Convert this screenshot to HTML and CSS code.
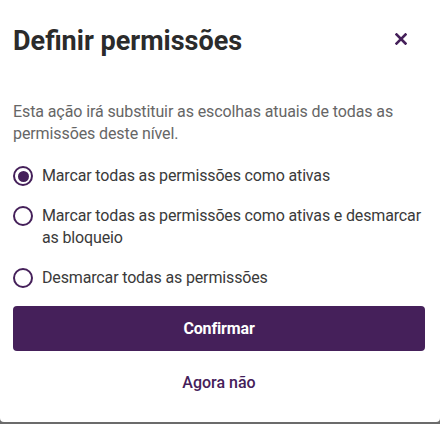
FILE: index.html
```html
<!DOCTYPE html>
<html lang="pt">
<head>
    <meta charset="UTF-8">
    <meta name="viewport" content="width=device-width, initial-scale=1.0">
    <title>Definir permissões</title>
    <link rel="stylesheet" href="styles.css">
</head>
<body>
    <div class="dialog">
        <div class="dialog-header">
            <h1>Definir permissões</h1>
            <button class="close-btn" aria-label="Fechar">
                <svg width="12" height="12" viewBox="0 0 12 12">
                    <path d="M1.5 1.5 L10.5 10.5 M10.5 1.5 L1.5 10.5" stroke="#45205a" stroke-width="2.6" stroke-linecap="square" fill="none"/>
                </svg>
            </button>
        </div>

        <p class="description">Esta ação irá substituir as escolhas atuais de todas as permissões deste nível.</p>

        <div class="options">
            <label class="option">
                <span class="radio checked"></span>
                <span class="option-text">Marcar todas as permissões como ativas</span>
            </label>
            <label class="option">
                <span class="radio"></span>
                <span class="option-text">Marcar todas as permissões como ativas e desmarcar as bloqueio</span>
            </label>
            <label class="option">
                <span class="radio"></span>
                <span class="option-text">Desmarcar todas as permissões</span>
            </label>
        </div>

        <button class="btn-primary">Confirmar</button>
        <button class="btn-secondary">Agora não</button>
    </div>
</body>
</html>
```

FILE: styles.css
```css
body {
    font-family: Roboto, "Liberation Sans", sans-serif;
    margin: 0;
    padding: 0;
    background-color: #6b6b6b;
}

.dialog {
    background-color: #fff;
    width: 440px;
    height: 422px;
    box-sizing: border-box;
    padding: 25px 15px 0 13px;
    border-radius: 0 0 4px 4px;
}

.dialog-header {
    display: flex;
    align-items: flex-start;
    justify-content: space-between;
}

h1 {
    margin: 0;
    font-size: 27px;
    line-height: 32px;
    font-weight: 700;
    color: #2b2b2b;
}

.close-btn {
    background: none;
    border: none;
    padding: 0;
    width: 24px;
    height: 24px;
    margin-top: 2px;
    margin-right: 12px;
    display: flex;
    align-items: center;
    justify-content: center;
}

.description {
    margin: 44px 0 0;
    font-size: 16px;
    line-height: 22px;
    letter-spacing: -0.1px;
    color: #666;
}

.options {
    margin-top: 20px;
    display: flex;
    flex-direction: column;
    gap: 18px;
}

.option {
    display: flex;
    align-items: flex-start;
    gap: 9px;
    font-size: 16px;
    line-height: 22px;
    letter-spacing: -0.15px;
    color: #3a3a3a;
}

.radio {
    flex: none;
    width: 20px;
    height: 20px;
    box-sizing: border-box;
    border: 2px solid #45205a;
    border-radius: 50%;
    margin-top: 1px;
    display: flex;
    align-items: center;
    justify-content: center;
}

.radio.checked::after {
    content: "";
    width: 11px;
    height: 11px;
    border-radius: 50%;
    background-color: #45205a;
}

.btn-primary {
    display: block;
    width: 100%;
    height: 45px;
    margin-top: 17px;
    border: none;
    border-radius: 4px;
    background-color: #45205a;
    color: #fff;
    font-family: inherit;
    font-size: 16px;
    font-weight: 700;
    letter-spacing: -0.15px;
}

.btn-secondary {
    display: block;
    width: 100%;
    height: 45px;
    margin-top: 9px;
    border: none;
    background: none;
    color: #45205a;
    font-family: inherit;
    font-size: 16px;
    font-weight: 500;
}
```
